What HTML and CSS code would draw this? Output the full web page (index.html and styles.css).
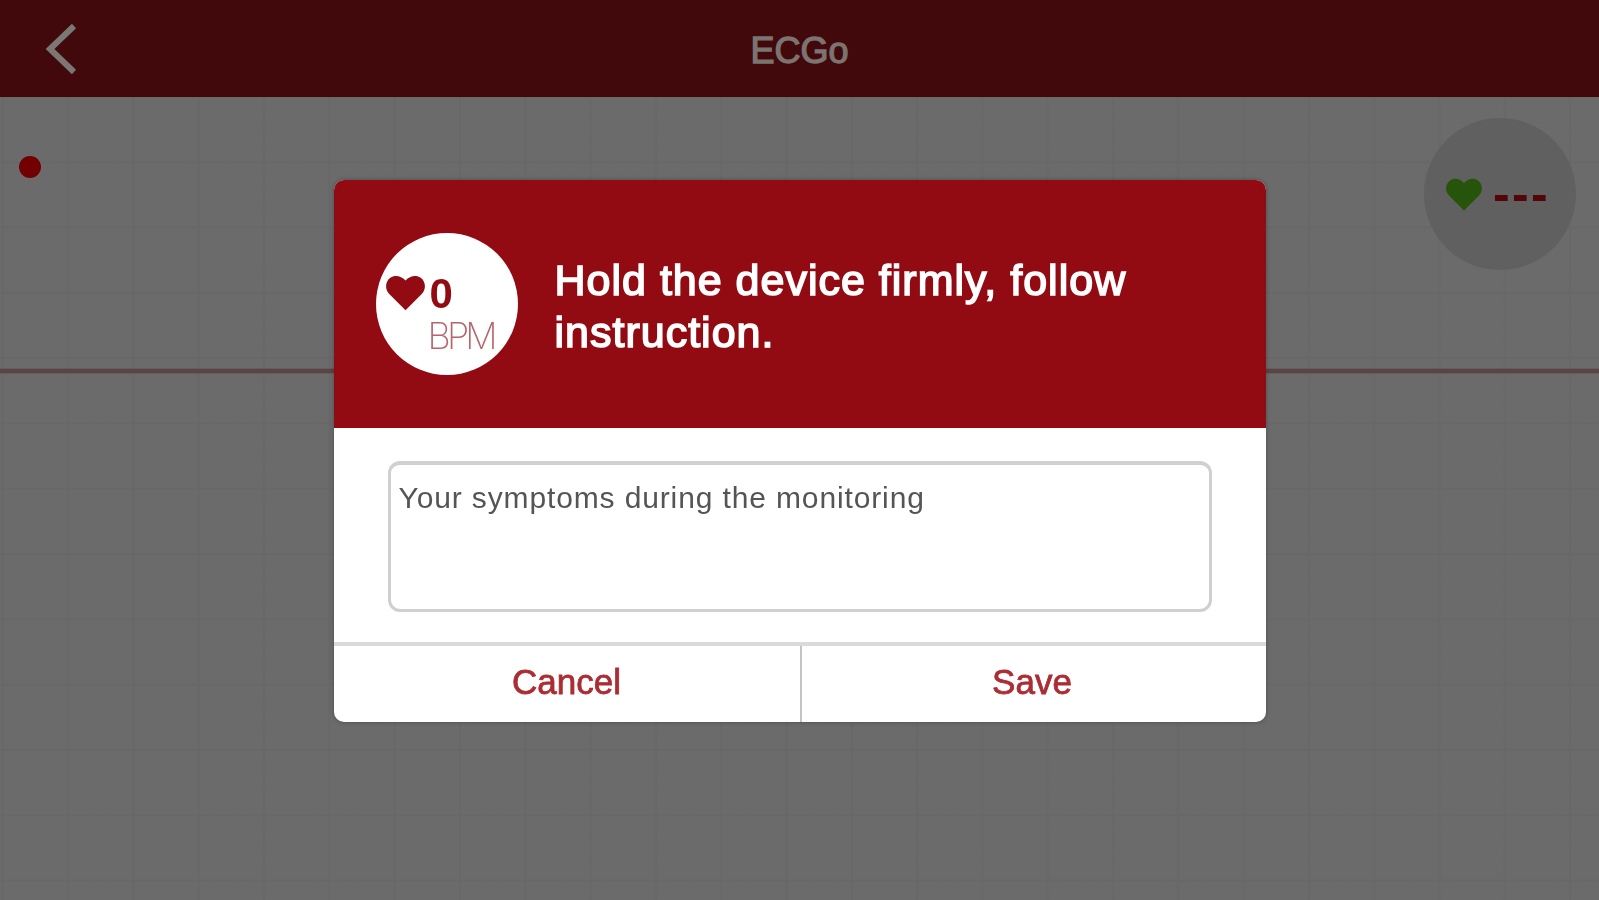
FILE: index.html
```html
<!DOCTYPE html>
<html lang="en">
<head>
  <meta charset="UTF-8">
  <meta name="viewport" content="width=device-width, initial-scale=1.0">
  <title>ECGo</title>
  <link rel="stylesheet" href="styles.css">
</head>
<body>
  <header class="navbar">
    <a class="back" href="#" aria-label="Back">
      <svg width="36" height="54" viewBox="0 0 36 54"><path d="M31 4 L7 27 L31 50"/></svg>
    </a>
    <h1>ECGo</h1>
  </header>

  <main class="monitor">
    <div class="status">
      <span class="record-dot"></span>
      <div class="rate">
        <svg class="heart" viewBox="0 0 36 32"><path d="M18 32 L3 17 C-1.500 12.500 -.5 5 4 2 C8 -1 14 0 18 4.500 C22 0 28 -1 32 2 C36.500 5 37.500 12.500 33 17 Z"/></svg>
        <span class="rate-value">---</span>
      </div>
    </div>
    <div class="signal"></div>
  </main>

  <div class="overlay">
    <div class="modal">
      <div class="modal-head">
        <div class="bpm">
          <svg class="heart" viewBox="0 0 36 32"><path d="M18 32 L3 17 C-1.500 12.500 -.5 5 4 2 C8 -1 14 0 18 4.500 C22 0 28 -1 32 2 C36.500 5 37.500 12.500 33 17 Z"/></svg>
          <div class="bpm-text">
            <strong>0</strong>
            <span>BPM</span>
          </div>
        </div>
        <p class="message">Hold the device firmly, follow<br>instruction.</p>
      </div>
      <div class="modal-body">
        <textarea class="symptoms" placeholder="Your symptoms during the monitoring"></textarea>
      </div>
      <div class="modal-actions">
        <button>Cancel</button>
        <button>Save</button>
      </div>
    </div>
  </div>
</body>
</html>
```
FILE: styles.css
```css
* {
  box-sizing: border-box;
}
body {
  margin: 0;
  height: 100vh;
  overflow: hidden;
  display: flex;
  flex-direction: column;
  font-family: "Liberation Sans", Arial, sans-serif;
  background-color: #6b6b6b;
}

/* top bar */
.navbar {
  height: 97px;
  display: grid;
  grid-template-columns: 120px 1fr 120px;
  align-items: center;
  background-color: #41090c;
  color: #7b7471;
}
.back {
  display: block;
  height: 54px;
  margin-left: 43px;
}
.back svg {
  display: block;
  fill: none;
  stroke: #7b7773;
  stroke-width: 6;
}
.navbar h1 {
  margin: 0;
  padding-top: 4px;
  font-size: 36px;
  font-weight: normal;
  line-height: 42px;
  text-align: center;
  -webkit-text-stroke: 1.3px #7b7471;
}

/* chart paper */
.monitor {
  flex: 1;
  background-color: #6b6b6b;
  background-image:
    linear-gradient(to right, #686868 2px, transparent 2px),
    linear-gradient(#686868 2px, transparent 2px),
    linear-gradient(to right, #6a6a6a 1px, transparent 1px),
    linear-gradient(#6a6a6a 1px, transparent 1px);
  background-size: 65.3px 65.3px, 65.3px 65.3px, 13.06px 13.06px, 13.06px 13.06px;
  background-position: 2px -1px;
}
.status {
  height: 271px;
  padding: 21px 23px 0 19px;
  display: flex;
  justify-content: space-between;
  align-items: flex-start;
}
.record-dot {
  width: 22px;
  height: 22px;
  margin-top: 38px;
  border-radius: 50%;
  background-color: #720003;
}
.rate {
  width: 152px;
  height: 152px;
  padding: 0 0 0 22px;
  display: flex;
  align-items: center;
  gap: 11px;
  border-radius: 50%;
  background-color: #606060;
}
.rate .heart {
  width: 36px;
  height: 33px;
  fill: #27540b;
}
.rate-value {
  color: #530609;
  font-size: 50px;
  font-weight: bold;
  letter-spacing: 2.4px;
}
.signal {
  height: 6px;
  border: solid #655e5e;
  border-width: 1px 0;
  background-color: #5a4444;
}

/* dialog */
.overlay {
  position: fixed;
  inset: 0;
  padding-top: 2px;
  display: flex;
  justify-content: center;
  align-items: center;
}
.modal {
  width: 932px;
  height: 542px;
  display: flex;
  flex-direction: column;
  overflow: hidden;
  border-radius: 10px;
  background-color: #fff;
  box-shadow: 0 0 4px rgba(0, 0, 0, 0.3);
}
.modal-head {
  height: 249px;
  padding: 0 42px;
  display: flex;
  align-items: center;
  gap: 37px;
  background-color: #930b12;
}
.bpm {
  width: 142px;
  height: 142px;
  padding: 42px 0 0 10px;
  flex-shrink: 0;
  display: flex;
  align-items: flex-start;
  gap: 5px;
  border-radius: 50%;
  background-color: #fff;
  color: #930b12;
}
.bpm .heart {
  width: 39px;
  height: 36px;
  flex-shrink: 0;
  fill: #930b12;
}
.bpm-text {
  display: flex;
  flex-direction: column;
}
.bpm-text strong {
  font-size: 42px;
  line-height: 38px;
}
.bpm-text span {
  font-family: Inter, "Liberation Sans", sans-serif;
  font-size: 36px;
  font-weight: 200;
  line-height: 47px;
  letter-spacing: -3.8px;
  margin-left: -2px;
  color: #b8646a;
}
.message {
  margin: 0;
  padding-top: 4px;
  font-size: 43px;
  line-height: 52px;
  letter-spacing: 1px;
  white-space: nowrap;
  color: #fff;
  -webkit-text-stroke: 1.6px #fff;
}
.modal-body {
  flex: 1;
  padding: 33px 54px 30px;
}
.symptoms {
  display: block;
  width: 100%;
  height: 151px;
  padding: 15px 8px;
  border: 3px solid #d0d0d0;
  border-top-width: 4px;
  border-radius: 12px;
  resize: none;
  font-family: inherit;
  font-size: 30px;
  line-height: 36px;
  letter-spacing: 0.87px;
}
.symptoms::placeholder {
  color: #555;
}
.modal-actions {
  height: 80px;
  display: grid;
  grid-template-columns: 466px 466px;
  border-top: 4px solid #dadada;
}
.modal-actions button {
  padding: 0 0 4px;
  border: none;
  background: none;
  color: #ab2d34;
  font-family: inherit;
  font-size: 35px;
  -webkit-text-stroke: 0.8px #ab2d34;
}
.modal-actions button + button {
  padding-right: 3px;
  border-left: 2px solid #c4c4c4;
}
```
